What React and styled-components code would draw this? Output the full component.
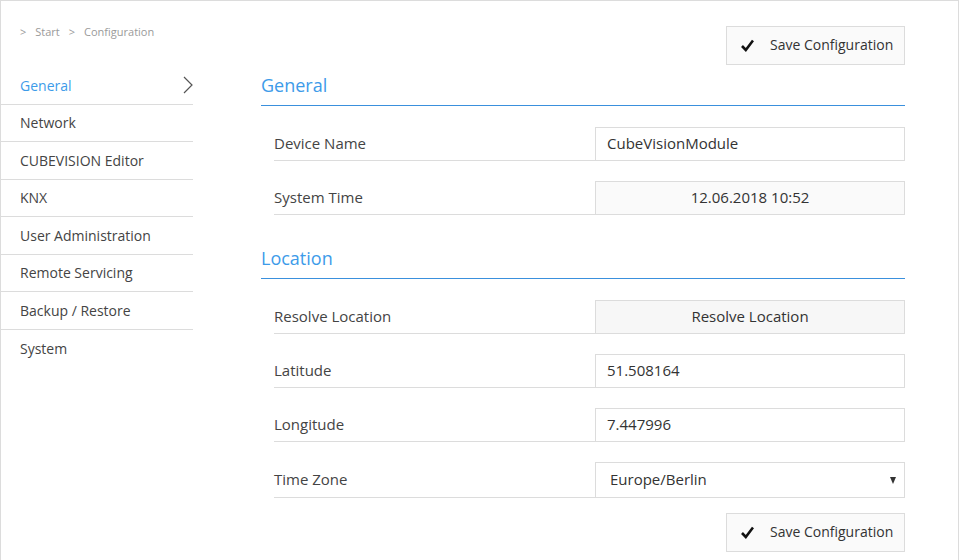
import React from "react";
import styled, { createGlobalStyle } from "styled-components";

const GlobalStyle = createGlobalStyle`
  html, body {
    margin: 0;
    padding: 0;
    background: #fff;
  }
  body {
    font-family: "Open Sans", "Noto Sans", sans-serif;
    color: #444;
  }
  * {
    box-sizing: border-box;
  }
`;

const Page = styled.div`
  width: 959px;
  height: 560px;
  border: 1px solid #dcdcdc;
  border-bottom: none;
  display: grid;
  grid-template-columns: 192px 1fr;
  overflow: hidden;
`;

const Sidebar = styled.aside`
  display: flex;
  flex-direction: column;
`;

const Breadcrumb = styled.div`
  height: 66px;
  padding: 23px 0 0 19px;
  font-size: 11px;
  color: #9a9a9a;
  display: flex;
  gap: 9px;
`;

const NavList = styled.nav`
  display: flex;
  flex-direction: column;
`;

const NavItem = styled.div`
  height: 37.5px;
  padding: 0 0 0 19px;
  display: flex;
  align-items: center;
  justify-content: space-between;
  font-size: 14px;
  color: ${(p) => (p.$active ? "#3d9be9" : "#444")};
  border-bottom: ${(p) => (p.$last ? "none" : "1px solid #dcdcdc")};
`;

const Chevron = () => (
  <svg width="10" height="18" viewBox="0 0 10 18">
    <polyline
      points="1,1 9,9 1,17"
      fill="none"
      stroke="#555"
      strokeWidth="1.2"
    />
  </svg>
);

const Main = styled.main`
  padding: 25px 53px 0 68px;
  display: flex;
  flex-direction: column;
`;

const Toolbar = styled.div`
  display: flex;
  justify-content: flex-end;
`;

const Button = styled.button`
  width: 179px;
  height: 39px;
  border: 1px solid #dcdcdc;
  background: #fafafa;
  display: flex;
  align-items: center;
  gap: 16px;
  padding: 0 0 2px 14px;
  font-family: inherit;
  font-size: 14px;
  color: #333;
  cursor: pointer;

  svg {
    margin-top: 2px;
  }
`;

const Check = () => (
  <svg width="13" height="13" viewBox="0 0 13 13">
    <path
      d="M1 7 L4.8 11 L12 1.5"
      fill="none"
      stroke="#111"
      strokeWidth="2.6"
      strokeLinejoin="miter"
    />
  </svg>
);

const SectionTitle = styled.h2`
  margin: ${(p) => (p.$first ? "0" : "23px")} 0 0;
  height: 41px;
  padding-top: 8px;
  font-size: 18px;
  font-weight: 400;
  color: #3d9be9;
  border-bottom: 1px solid #3a90dd;
`;

const Fields = styled.div`
  padding: 21px 0 0 13px;
  display: flex;
  flex-direction: column;
  gap: 20px;
`;

const Row = styled.div`
  display: grid;
  grid-template-columns: 321px 1fr;
  height: ${(p) => (p.$tall ? "36px" : "34px")};
`;

const Label = styled.div`
  display: flex;
  align-items: center;
  padding-bottom: 2px;
  font-size: 15px;
  color: #444;
  border-bottom: 1px solid #dcdcdc;
`;

const TextInput = styled.input`
  width: 100%;
  height: 100%;
  margin: 0;
  border: 1px solid #dcdcdc;
  padding: 0 11px 2px;
  font-family: inherit;
  font-size: 15px;
  color: #333;
  background: ${(p) => (p.$muted ? "#fafafa" : "#fff")};
  text-align: ${(p) => (p.$center ? "center" : "left")};
  outline: none;
`;

const FieldButton = styled.button`
  width: 100%;
  height: 100%;
  margin: 0;
  padding: 0 0 2px;
  border: 1px solid #dcdcdc;
  background: #f7f7f7;
  font-family: inherit;
  font-size: 15px;
  color: #333;
  cursor: pointer;
`;

const SelectBox = styled.div`
  height: 100%;
  border: 1px solid #dcdcdc;
  display: flex;
  align-items: center;
  justify-content: space-between;
  padding: 0 8px 2px 14px;
  font-size: 15px;
  color: #333;
`;

const Caret = styled.span`
  width: 0;
  height: 0;
  margin-top: 2px;
  border-left: 3.5px solid transparent;
  border-right: 3.5px solid transparent;
  border-top: 7px solid #333;
`;

const Footer = styled.div`
  display: flex;
  justify-content: flex-end;
  padding-top: 15px;
`;

const navItems = [
  "General",
  "Network",
  "CUBEVISION Editor",
  "KNX",
  "User Administration",
  "Remote Servicing",
  "Backup / Restore",
  "System",
];

const SaveButton = () => (
  <Button>
    <Check />
    <span>Save Configuration</span>
  </Button>
);

const App = () => {
  return (
    <>
      <GlobalStyle />
      <Page>
        <Sidebar>
          <Breadcrumb>
            <span>&gt;</span>
            <span>Start</span>
            <span>&gt;</span>
            <span>Configuration</span>
          </Breadcrumb>
          <NavList>
            {navItems.map((item, i) => (
              <NavItem
                key={item}
                $active={i === 0}
                $last={i === navItems.length - 1}
              >
                {item}
                {i === 0 && <Chevron />}
              </NavItem>
            ))}
          </NavList>
        </Sidebar>

        <Main>
          <Toolbar>
            <SaveButton />
          </Toolbar>

          <SectionTitle $first>General</SectionTitle>
          <Fields>
            <Row>
              <Label>Device Name</Label>
              <TextInput defaultValue="CubeVisionModule" />
            </Row>
            <Row>
              <Label>System Time</Label>
              <TextInput $muted $center readOnly value="12.06.2018 10:52" />
            </Row>
          </Fields>

          <SectionTitle>Location</SectionTitle>
          <Fields>
            <Row>
              <Label>Resolve Location</Label>
              <FieldButton>Resolve Location</FieldButton>
            </Row>
            <Row>
              <Label>Latitude</Label>
              <TextInput defaultValue="51.508164" />
            </Row>
            <Row>
              <Label>Longitude</Label>
              <TextInput defaultValue="7.447996" />
            </Row>
            <Row $tall>
              <Label>Time Zone</Label>
              <SelectBox>
                <span>Europe/Berlin</span>
                <Caret />
              </SelectBox>
            </Row>
          </Fields>

          <Footer>
            <SaveButton />
          </Footer>
        </Main>
      </Page>
    </>
  );
};

export default App;
